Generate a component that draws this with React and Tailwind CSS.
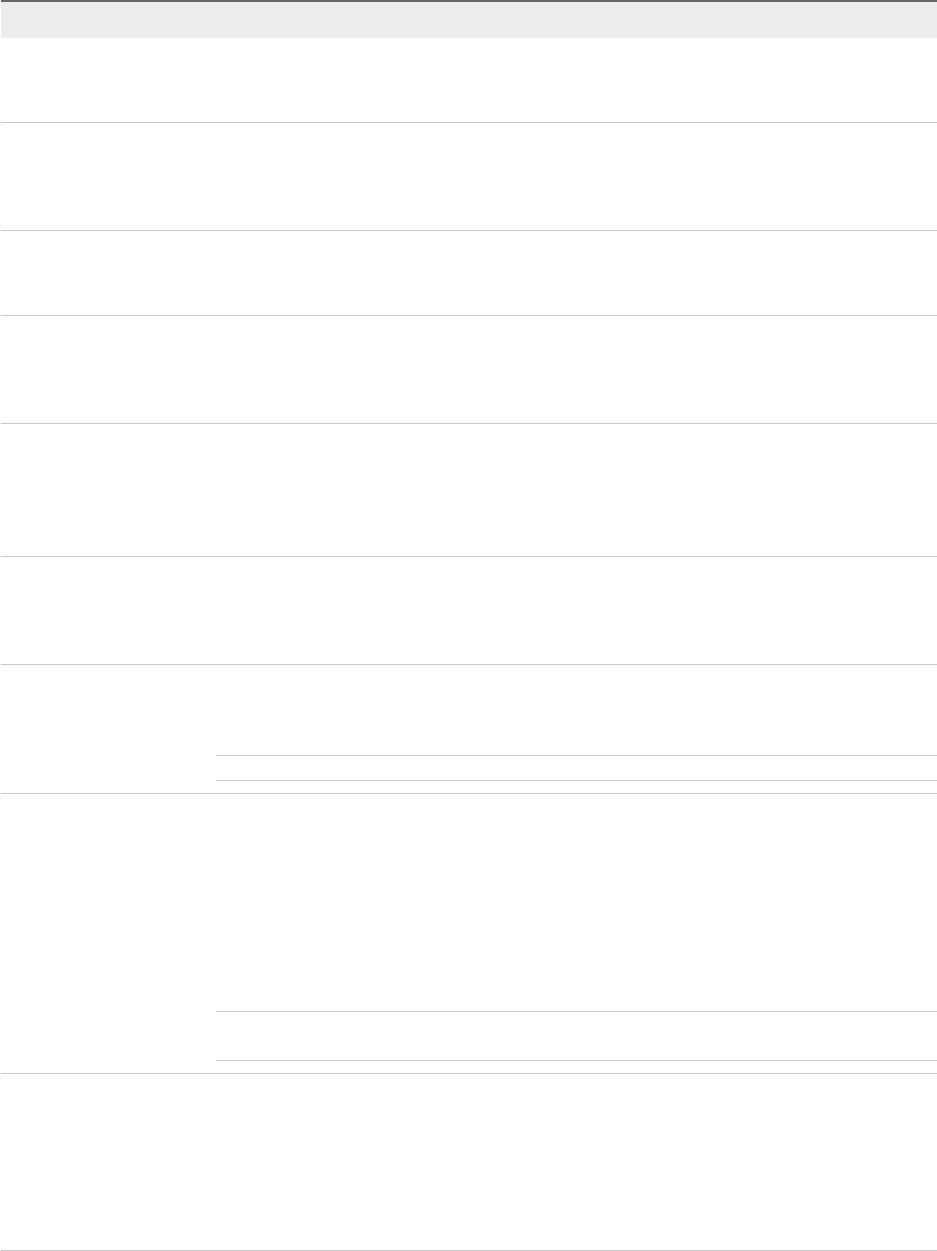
const rows = [
  { h: "h-[85px]" },
  { h: "h-[108px]" },
  { h: "h-[85px]" },
  { h: "h-[108px]" },
  { h: "h-[133px]" },
  { h: "h-[108px]" },
];

function Row({ h }) {
  return (
    <div className={`flex border-b border-[#c8c8c8] ${h}`}>
      <div className="w-[215px] shrink-0" />
      <div className="flex-1" />
    </div>
  );
}

function SplitRow({ parts }) {
  return (
    <div className="flex border-b border-[#c8c8c8]">
      <div className="w-[215px] shrink-0" />
      <div className="flex flex-1 flex-col">
        {parts.map((h, i) => (
          <div
            key={i}
            className={`${h} ${i < parts.length - 1 ? "border-b border-[#c8c8c8]" : ""}`}
          />
        ))}
      </div>
    </div>
  );
}

export default function App() {
  return (
    <div className="min-h-[1251px] bg-white pl-px font-['Liberation_Sans',sans-serif] text-sm text-[#333]">
      <div className="w-[936px]">
        {/* Header */}
        <div className="flex h-[38px] border-t-2 border-[#666] bg-[#ececec]">
          <div className="w-[215px] shrink-0" />
          <div className="flex-1" />
        </div>

        {rows.map((r, i) => (
          <Row key={i} h={r.h} />
        ))}

        <SplitRow parts={["h-[91px]", "h-[25px]", "h-[12px]"]} />
        <SplitRow parts={["h-[218px]", "h-[49px]", "h-[12px]"]} />

        <Row h="h-[177px]" />
      </div>
    </div>
  );
}
